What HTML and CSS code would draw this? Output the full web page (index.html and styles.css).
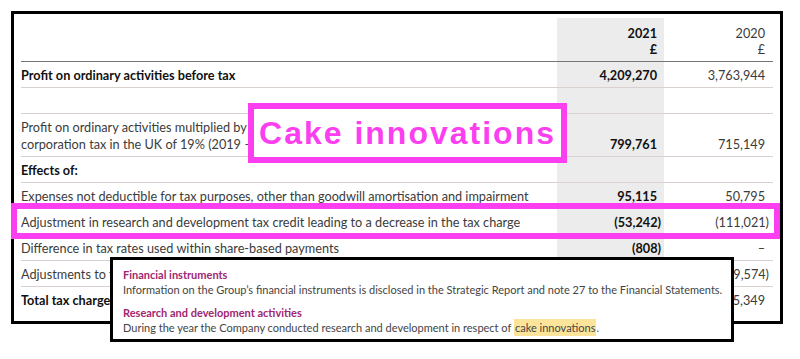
FILE: index.html
```html
<!DOCTYPE html>
<html lang="en">
<head>
<meta charset="utf-8">
<title>Tax reconciliation</title>
<link rel="stylesheet" href="styles.css">
</head>
<body>
<div class="stage">
  <div class="frame">
    <div class="row head">
      <div class="lbl"></div>
      <div class="val cur">2021<br>£</div>
      <div class="val prev">2020<br>£</div>
    </div>
    <div class="row strong">
      <div class="lbl">Profit on ordinary activities before tax</div>
      <div class="val cur">4,209,270</div>
      <div class="val prev">3,763,944</div>
    </div>
    <div class="row">
      <div class="lbl"></div>
      <div class="val cur"></div>
      <div class="val prev"></div>
    </div>
    <div class="row tall">
      <div class="lbl">Profit on ordinary activities multiplied by standard rate of<br>corporation tax in the UK of 19% (2019 – 19%)</div>
      <div class="val cur">799,761</div>
      <div class="val prev">715,149</div>
    </div>
    <div class="row strong">
      <div class="lbl">Effects of:</div>
      <div class="val cur"></div>
      <div class="val prev"></div>
    </div>
    <div class="row">
      <div class="lbl">Expenses not deductible for tax purposes, other than goodwill amortisation and impairment</div>
      <div class="val cur">95,115</div>
      <div class="val prev">50,795</div>
    </div>
    <div class="row">
      <div class="lbl">Adjustment in research and development tax credit leading to a decrease in the tax charge</div>
      <div class="val cur"><span class="neg">(53,242)</span></div>
      <div class="val prev"><span class="neg">(111,021)</span></div>
    </div>
    <div class="row">
      <div class="lbl">Difference in tax rates used within share-based payments</div>
      <div class="val cur"><span class="neg">(808)</span></div>
      <div class="val prev">–</div>
    </div>
    <div class="row">
      <div class="lbl">Adjustments to tax charge in respect of prior periods</div>
      <div class="val cur"><span class="neg">(12,436)</span></div>
      <div class="val prev"><span class="neg">(29,574)</span></div>
    </div>
    <div class="row strong last">
      <div class="lbl">Total tax charge</div>
      <div class="val cur">829,075</div>
      <div class="val prev">625,349</div>
    </div>
  </div>

  <div class="mark-row"></div>
  <div class="mark-label">Cake innovations</div>

  <div class="tooltip">
    <div class="tip-item">
      <div class="tip-title">Financial instruments</div>
      <div class="tip-text">Information on the Group’s financial instruments is disclosed in the Strategic Report and note 27 to the Financial Statements.</div>
    </div>
    <div class="tip-item">
      <div class="tip-title">Research and development activities</div>
      <div class="tip-text">During the year the Company conducted research and development in respect of <span class="hl">cake innovations</span>.</div>
    </div>
  </div>
</div>
</body>
</html>
```

FILE: styles.css
```css
* { box-sizing: border-box; }

html, body {
  margin: 0;
  padding: 0;
  background: #ffffff;
}

.stage {
  position: relative;
  width: 800px;
  height: 359px;
  overflow: hidden;
  font-family: Lato, "Noto Sans", sans-serif;
}

.frame {
  position: absolute;
  left: 11px;
  top: 11px;
  width: 772px;
  height: 313px;
  border: 3px solid #000;
  padding: 4px 7px 0 7px;
  background: #fff;
}

.row {
  display: grid;
  grid-template-columns: 1fr 107px 109px;
  height: 26px;
  border-bottom: 1px solid #d9d1cd;
  font-size: 12.7px;
  color: #3b3b3b;
}

.row > div {
  display: flex;
  align-items: center;
  white-space: nowrap;
  overflow: hidden;
}

.row .val {
  justify-content: flex-end;
  padding-right: 7px;
  overflow: visible;
}

.row .cur {
  background: #ececec;
  font-weight: 700;
  color: #111;
}

.row .prev {
  padding-right: 8px;
}

.neg {
  margin-right: -4px;
}

.row.head {
  height: 44px;
  border-bottom: 1px solid #767676;
}

.row.head .val {
  align-items: flex-start;
  text-align: right;
  line-height: 16px;
  padding-top: 7px;
}

.row.tall {
  height: 43px;
}

.row.tall .lbl {
  line-height: 17px;
  padding-top: 2px;
}

.row.tall .val {
  align-items: flex-end;
  padding-bottom: 4px;
}

.row.strong .lbl {
  font-weight: 700;
  color: #111;
}

.row.last {
  border-bottom: none;
}

.mark-row {
  position: absolute;
  left: 11px;
  top: 203px;
  width: 769px;
  height: 36px;
  border: 6px solid #fb3ff0;
}

.mark-label {
  position: absolute;
  left: 248px;
  top: 103px;
  width: 319px;
  height: 60px;
  border: 6px solid #fb3ff0;
  background: #fff;
  color: #fb3ff0;
  font-family: "Liberation Sans", Arial, sans-serif;
  font-weight: 700;
  font-size: 32px;
  letter-spacing: 2px;
  display: flex;
  align-items: center;
  justify-content: center;
}

.tooltip {
  position: absolute;
  left: 110px;
  top: 257px;
  width: 624px;
  height: 85px;
  border: 3px solid #000;
  background: #fff;
  padding: 7px 10px;
  display: flex;
  flex-direction: column;
  gap: 8px;
  font-size: 11px;
  line-height: 15px;
  white-space: nowrap;
}

.tip-title {
  color: #a02672;
  font-weight: 700;
}

.tip-text {
  color: #444;
}

.hl {
  background: #fde49b;
  padding: 2px 1px;
}
```
